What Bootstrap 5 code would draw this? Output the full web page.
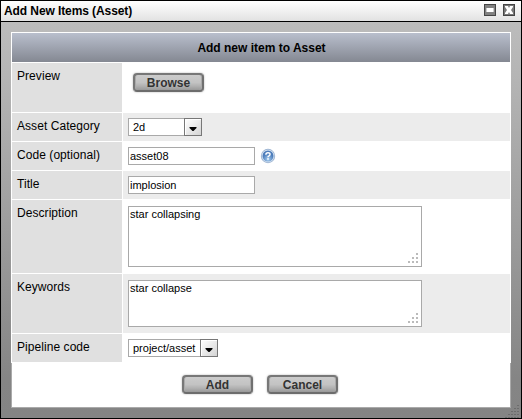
<!DOCTYPE html>
<html lang="en">
<head>
<meta charset="utf-8">
<meta name="viewport" content="width=device-width, initial-scale=1">
<title>Add New Items (Asset)</title>
<link href="https://cdn.jsdelivr.net/npm/bootstrap@5.3.0/dist/css/bootstrap.min.css" rel="stylesheet">
<style>
body{font-family:"Liberation Sans",Arial,sans-serif;font-size:12px;line-height:14px;color:#000;overflow:hidden}
.dialog{width:522px;height:419px;border:1px solid #000;background:#999}
.titlebar{height:21px;border-bottom:1px solid #000;background:linear-gradient(#fff,#e2e2e2);padding:0 6px 0 3px;line-height:20px}
.caption-text{letter-spacing:-.09px}
.tools{gap:7px;padding-top:3px}
.stage{height:396px;padding:10px;background:linear-gradient(#bcbcbc,#b4b4b4 15%,#858585 90%,#848484)}
.panel{width:500px;height:376px}
.sheet{padding:1px;gap:1px;background:#fff;height:331px}
.sheet-head{height:29px;background:linear-gradient(#b9bfcd,#848892);line-height:30px;padding-left:1px}
.line{gap:1px}
.name{width:110px;background:#e0e0e0;padding:6px 5px;letter-spacing:.06px}
.val{background:#fff;padding:5px}
.alt .val{background:#ececec}
.h49{height:49px}.h28{height:28px}.h73{height:73px}.h59{height:59px}
.val-area{padding-top:6px}
.fld{border:1px solid #a9a9a9;background:#fff;font-size:11px;line-height:12px;color:#000;border-radius:0;padding:2px 1px;display:block;outline:0;resize:none;font-family:inherit}
.txt{width:127px;height:18px}
.area{position:relative;width:294px}
.area textarea{width:294px;overflow:hidden;padding-top:1px}
.area svg{position:absolute;right:4px;bottom:4px}
.drop{height:18px;padding:0 0 0 4px;line-height:17px}
.arrow{width:18px;height:18px;margin:-1px -1px -1px 0;border:1px solid #777;background:linear-gradient(135deg,#fff,#d4d4d4);box-shadow:inset 1px 1px #fff}
.push{width:71px;height:19px;padding:0;border:2px solid #777;border-color:#777 #707070 #6c6c6c #777;border-radius:4px;background:linear-gradient(#cbcbcb,#c3c3c3 50%,#b0b0b0 75%,#999);box-shadow:0 0 2px #aaa,inset 1px 0 #aaa,inset -1px 0 #aaa;font:bold 12px/14px "Liberation Sans",Arial,sans-serif;color:#333}
.push span{display:block;padding-top:1px}
.browse{margin:5px 0 0 5px}
.foot{height:45px;border:1px solid #aaa;border-top:0;background:#fff;padding:12px 2px 0 0;gap:14px}
.help{margin:1px 0 0 5px}
.grip{position:absolute;right:2px;bottom:0}
</style>
<script src="https://cdn.jsdelivr.net/npm/bootstrap@5.3.0/dist/js/bootstrap.bundle.min.js"></script>
</head>
<body>
<div class="dialog position-relative">
  <div class="titlebar d-flex justify-content-between">
    <span class="fw-bold caption-text">Add New Items (Asset)</span>
    <div class="d-flex tools">
      <svg width="12" height="12" shape-rendering="crispEdges"><rect width="12" height="12" fill="#444"/><rect x="1" y="1" width="10" height="10" fill="#808080"/><rect x="2" y="4" width="8" height="4" fill="#ccc"/><rect x="3" y="4" width="6" height="4" fill="#fff"/></svg>
      <svg width="12" height="12"><rect width="12" height="12" fill="#444"/><rect x="1" y="1" width="10" height="10" fill="#777"/><path d="M2 2h3l1 2 1-2h3v1L8 6l2 3v1H7L6 8l-1 2H2V9l2-3-2-3z" fill="#fff"/></svg>
    </div>
  </div>
  <div class="stage">
    <div class="panel">
      <div class="sheet d-flex flex-column">
        <div class="sheet-head text-center fw-bold">Add new item to Asset</div>
        <div class="line d-flex h49"><label class="name">Preview</label><div class="val flex-fill"><button type="button" class="push d-block browse"><span>Browse</span></button></div></div>
        <div class="line d-flex h28 alt"><label class="name">Asset Category</label><div class="val flex-fill"><div class="fld drop d-flex justify-content-between" style="width:74px"><span>2d</span><span class="arrow"><svg class="d-block" width="16" height="16"><path d="M4.500 8h7v1l-3 3h-1l-3-3z"/></svg></span></div></div></div>
        <div class="line d-flex h28"><label class="name" for="code">Code (optional)</label><div class="val flex-fill d-flex"><input id="code" class="fld txt" value="asset08">
          <svg class="help" width="16" height="16"><defs><radialGradient id="blue" cx=".5" cy=".8"><stop offset="0" stop-color="#a5cdf0"/><stop offset="1" stop-color="#4d7dbb"/></radialGradient></defs><circle cx="8" cy="8" r="7.200" fill="#9fb6d3"/><circle cx="8" cy="8" r="6.200" fill="#dce8f5"/><circle cx="8" cy="8" r="5.500" fill="url(#blue)"/><path d="M5.900 6.700Q5.900 4.800 8 4.800T10 6.400Q10 7.200 9 7.800Q8 8.300 8 9.200" fill="none" stroke="#fff" stroke-width="1.500"/><rect x="7.200" y="10.200" width="1.600" height="1.500" fill="#fff"/></svg></div></div>
        <div class="line d-flex h28 alt"><label class="name" for="ttl">Title</label><div class="val flex-fill"><input id="ttl" class="fld txt" value="implosion"></div></div>
        <div class="line d-flex h73"><label class="name" for="desc">Description</label><div class="val val-area flex-fill"><div class="area"><textarea id="desc" class="fld" style="height:61px">star collapsing</textarea><svg width="10" height="10" fill="#bbb" shape-rendering="crispEdges"><path d="M8 0h2v2H8zM4 4h2v2H4zM8 4h2v2H8zM0 8h2v2H0zM4 8h2v2H4zM8 8h2v2H8z"/></svg></div></div></div>
        <div class="line d-flex h59 alt"><label class="name" for="keys">Keywords</label><div class="val val-area flex-fill"><div class="area"><textarea id="keys" class="fld" style="height:47px">star collapse</textarea><svg width="10" height="10" fill="#bbb" shape-rendering="crispEdges"><path d="M8 0h2v2H8zM4 4h2v2H4zM8 4h2v2H8zM0 8h2v2H0zM4 8h2v2H4zM8 8h2v2H8z"/></svg></div></div></div>
        <div class="line d-flex h28"><label class="name">Pipeline code</label><div class="val flex-fill"><div class="fld drop d-flex justify-content-between" style="width:90px"><span>project/asset</span><span class="arrow"><svg class="d-block" width="16" height="16"><path d="M4.500 8h7v1l-3 3h-1l-3-3z"/></svg></span></div></div></div>
      </div>
      <div class="foot d-flex justify-content-center"><button type="button" class="push"><span>Add</span></button><button type="button" class="push"><span>Cancel</span></button></div>
    </div>
  </div>
  <svg class="grip" width="14" height="13" fill="#6c6c6c" shape-rendering="crispEdges"><path d="M12 0h2v1h-2zM9 3h2v1H9zM12 3h2v1h-2zM6 6h2v1H6zM9 6h2v1H9zM12 6h2v1h-2zM3 9h2v1H3zM6 9h2v1H6zM9 9h2v1H9zM12 9h2v1h-2zM0 12h2v1H0zM3 12h2v1H3zM6 12h2v1H6zM9 12h2v1H9zM12 12h2v1h-2z"/></svg>
</div>
</body>
</html>
